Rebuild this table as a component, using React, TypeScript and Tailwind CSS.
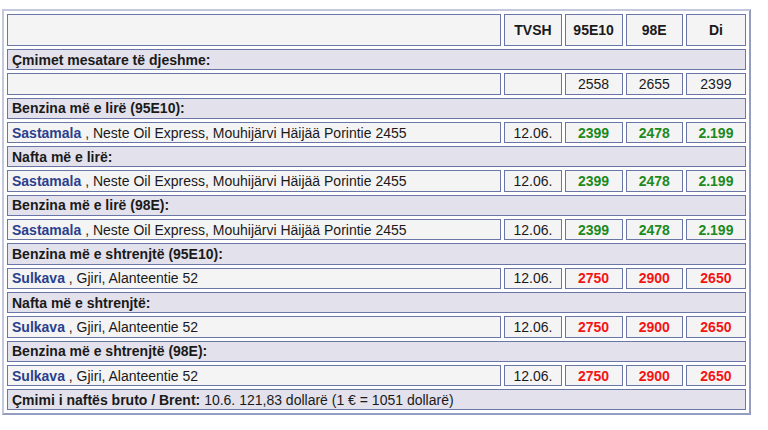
const cell = "border border-[#6a76a6] bg-[#f4f4f5] px-[4px] h-[21.3px] align-middle"
const section = "border border-[#6a76a6] bg-[#e3e1eb] px-[4px] h-[21.3px] align-middle font-bold text-left"

type Station = {
  town: string
  place: string
  prices: string[]
  cheap: boolean
}

const rows: { title: string; station: Station }[] = [
  {
    title: "Benzina më e lirë (95E10):",
    station: { town: "Sastamala", place: "Neste Oil Express, Mouhijärvi Häijää Porintie 2455", prices: ["2399", "2478", "2.199"], cheap: true },
  },
  {
    title: "Nafta më e lirë:",
    station: { town: "Sastamala", place: "Neste Oil Express, Mouhijärvi Häijää Porintie 2455", prices: ["2399", "2478", "2.199"], cheap: true },
  },
  {
    title: "Benzina më e lirë (98E):",
    station: { town: "Sastamala", place: "Neste Oil Express, Mouhijärvi Häijää Porintie 2455", prices: ["2399", "2478", "2.199"], cheap: true },
  },
  {
    title: "Benzina më e shtrenjtë (95E10):",
    station: { town: "Sulkava", place: "Gjiri, Alanteentie 52", prices: ["2750", "2900", "2650"], cheap: false },
  },
  {
    title: "Nafta më e shtrenjtë:",
    station: { town: "Sulkava", place: "Gjiri, Alanteentie 52", prices: ["2750", "2900", "2650"], cheap: false },
  },
  {
    title: "Benzina më e shtrenjtë (98E):",
    station: { town: "Sulkava", place: "Gjiri, Alanteentie 52", prices: ["2750", "2900", "2650"], cheap: false },
  },
]

export default function App() {
  return (
    <div className="w-[768px] h-[430px] bg-white pl-[2px] pt-[9px] font-['Liberation_Sans',Arial,sans-serif] text-[14px] leading-[16px] text-[#1a1a1a]">
      <table className="w-[749px] border-separate border-spacing-x-[3px] border-spacing-y-[3px] border-2 border-t-[#c3c8dc] border-l-[#c3c8dc] border-r-[#949dc0] border-b-[#949dc0]">
        <colgroup>
          <col className="w-[493px]" />
          <col className="w-[57px]" />
          <col className="w-[58px]" />
          <col className="w-[57px]" />
          <col className="w-[60px]" />
        </colgroup>
        <tbody>
          <tr>
            <td className={cell + " h-[32px]"}></td>
            <td className={cell + " h-[32px] text-center font-bold"}>TVSH</td>
            <td className={cell + " h-[32px] text-center font-bold"}>95E10</td>
            <td className={cell + " h-[32px] text-center font-bold"}>98E</td>
            <td className={cell + " h-[32px] text-center font-bold"}>Di</td>
          </tr>
          <tr>
            <td colSpan={5} className={section}>Çmimet mesatare të djeshme:</td>
          </tr>
          <tr>
            <td className={cell}></td>
            <td className={cell}></td>
            <td className={cell + " text-center"}>2558</td>
            <td className={cell + " text-center"}>2655</td>
            <td className={cell + " text-center"}>2399</td>
          </tr>
          {rows.map((r) => (
            <>
              <tr key={r.title + "-h"}>
                <td colSpan={5} className={section}>{r.title}</td>
              </tr>
              <tr key={r.title + "-d"}>
                <td className={cell}>
                  <span className="font-bold text-[#2b3f8c]">{r.station.town}</span> , {r.station.place}
                </td>
                <td className={cell + " text-center"}>12.06.</td>
                {r.station.prices.map((p, i) => (
                  <td
                    key={i}
                    className={cell + " text-center font-bold " + (r.station.cheap ? "text-[#1c8a1c]" : "text-[#f51414]")}
                  >
                    {p}
                  </td>
                ))}
              </tr>
            </>
          ))}
          <tr>
            <td colSpan={5} className={section}>
              Çmimi i naftës bruto / Brent: <span className="font-normal">10.6. 121,83 dollarë (1 € = 1051 dollarë)</span>
            </td>
          </tr>
        </tbody>
      </table>
    </div>
  )
}
